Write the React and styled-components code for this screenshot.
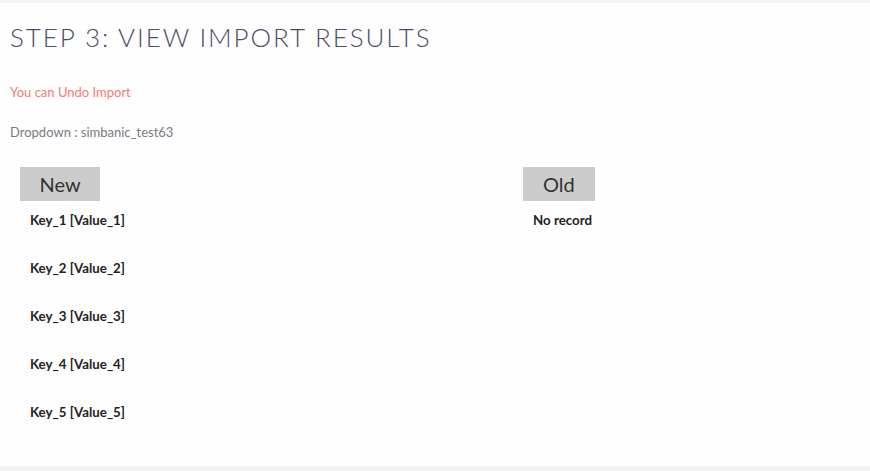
import React from 'react';
import styled, { createGlobalStyle } from 'styled-components';

const GlobalStyle = createGlobalStyle`
    body {
        margin: 0;
        background: #f3f3f3;
        font-family: Lato, "Open Sans", sans-serif;
    }
`

const Page = styled.div`
    padding: 3px 0 5px;
`

const Panel = styled.div`
    background: #fefefe;
    height: 463px;
    box-sizing: border-box;
    padding: 18px 10px 0;
`

const Title = styled.h2`
    margin: 0;
    font-weight: 300;
    font-size: 26px;
    line-height: 32px;
    letter-spacing: 1.9px;
    text-transform: uppercase;
    color: #4b4e66;
`

const Note = styled.p`
    margin: ${p => p.top}px 0 0;
    font-size: 13px;
    line-height: 16px;
    color: ${p => p.color};
`

const Columns = styled.div`
    display: grid;
    grid-template-columns: 503px 1fr;
    margin-top: 27px;
    padding-left: 10px;
`

const Column = styled.div`
    display: flex;
    flex-direction: column;
    align-items: flex-start;
`

const Tag = styled.div`
    background: #cccccc;
    color: #333;
    font-size: 20px;
    height: 34px;
    line-height: 34px;
    padding: 0 ${p => p.pad}px;
`

const Item = styled.div`
    margin-left: 10px;
    font-size: 13.3px;
    font-weight: 700;
    color: #222;
    line-height: 16px;
    margin-top: ${p => (p.first ? 11 : 32)}px;
`

function App() {
    const rows = ['Key_1 [Value_1]', 'Key_2 [Value_2]', 'Key_3 [Value_3]', 'Key_4 [Value_4]', 'Key_5 [Value_5]']

    return (
        <Page>
            <GlobalStyle/>
            <Panel>
                <Title>Step 3: View Import Results</Title>
                <Note top={31} color="#f27d72">You can Undo Import</Note>
                <Note top={24} color="#7a7a85">Dropdown : simbanic_test63</Note>
                <Columns>
                    <Column>
                        <Tag pad={19.5}>New</Tag>
                        {rows.map((r, i) => <Item key={r} first={i === 0}>{r}</Item>)}
                    </Column>
                    <Column>
                        <Tag pad={20}>Old</Tag>
                        <Item first>No record</Item>
                    </Column>
                </Columns>
            </Panel>
        </Page>
    )
}

export default App;
